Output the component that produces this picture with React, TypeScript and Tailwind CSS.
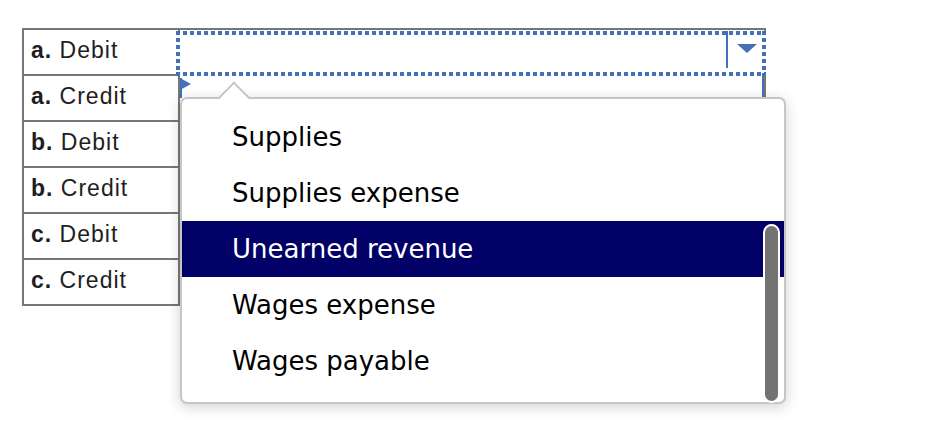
import React from "react";

const rows: { key: string; label: string }[] = [
  { key: "a.", label: "Debit" },
  { key: "a.", label: "Credit" },
  { key: "b.", label: "Debit" },
  { key: "b.", label: "Credit" },
  { key: "c.", label: "Debit" },
  { key: "c.", label: "Credit" },
];

const options = [
  "Supplies",
  "Supplies expense",
  "Unearned revenue",
  "Wages expense",
  "Wages payable",
];

const App = () => {
  return (
    <div className="relative w-[938px] h-[436px] bg-white overflow-hidden pl-[22px] pt-[28px]">
      {/* Journal table */}
      <div className="w-[744px] border-t-2 border-l-2 border-[#777]">
        {rows.map((r, i) => (
          <div key={i} className="flex h-[46px]">
            <div className="w-[156px] shrink-0 border-r-2 border-b-2 border-[#777] pl-[7px] pt-[7px] leading-[26px] text-[23px] tracking-[1px] text-[#1e1e1e] font-['Liberation_Sans',Arial,sans-serif]">
              <b>{r.key}</b> {r.label}
            </div>
            <div className="relative flex-1 border-r-2 border-b-2 border-[#777]">
              {i === 0 && (
                <div className="absolute left-[-4px] top-[1px] w-[590px] h-[45px] bg-white flex">
                  {/* dotted focus ring */}
                  <div className="absolute left-0 top-0 w-full h-[4px] bg-[linear-gradient(90deg,#4470bb_4px,transparent_4px)] bg-[length:7px_4px] bg-repeat-x" />
                  <div className="absolute left-0 bottom-0 w-full h-[4px] bg-[linear-gradient(90deg,#4470bb_4px,transparent_4px)] bg-[length:7px_4px] bg-repeat-x" />
                  <div className="absolute left-0 top-0 w-[4px] h-full bg-[linear-gradient(180deg,#4470bb_4px,transparent_4px)] bg-[length:4px_7px] bg-repeat-y" />
                  <div className="absolute right-0 top-0 w-[4px] h-full bg-[linear-gradient(180deg,#4470bb_4px,transparent_4px)] bg-[length:4px_7px] bg-repeat-y" />
                  <div className="flex-1" />
                  <div className="w-[2px] h-[37px] bg-[#4470bb]" />
                  <div className="w-[38px] flex justify-center pt-[13px]">
                    <svg width="20" height="9" viewBox="0 0 20 9">
                      <polygon points="0,0 20,0 10,9" fill="#4470bb" />
                    </svg>
                  </div>
                </div>
              )}
              {i === 1 && (
                <div className="absolute inset-0 border-r-2 border-[#4470bb]">
                  <svg
                    className="absolute left-0 top-[2px]"
                    width="11"
                    height="20"
                    viewBox="0 0 11 20"
                  >
                    <polygon points="0,0 11,6 0,12" fill="#4470bb" />
                    <rect x="0" y="0" width="2" height="20" fill="#4470bb" />
                  </svg>
                </div>
              )}
            </div>
          </div>
        ))}
      </div>

      {/* Dropdown list */}
      <div className="absolute left-[180px] top-[97px] w-[606px] h-[307px] bg-white border-2 border-[#c6c6c6] rounded-[7px] shadow-[0_3px_14px_rgba(0,0,0,0.18)]">
        <div className="absolute left-[41px] top-[-13px] w-[22px] h-[22px] bg-white border-t-2 border-l-2 border-[#c6c6c6] rotate-45" />
        <div className="relative pt-[10px]">
          {options.map((o, i) => (
            <div
              key={o}
              className={`h-[56px] flex items-center pl-[50px] text-[26px] font-['DejaVu_Sans',Verdana,sans-serif] ${
                i === 2 ? "bg-[#000066] text-white" : "text-black"
              }`}
            >
              {o}
            </div>
          ))}
        </div>
        <div className="absolute left-[581px] top-[125px] w-[17px] h-[179px] bg-[#737373] border-2 border-white rounded-full" />
      </div>
    </div>
  );
};

export default App;
